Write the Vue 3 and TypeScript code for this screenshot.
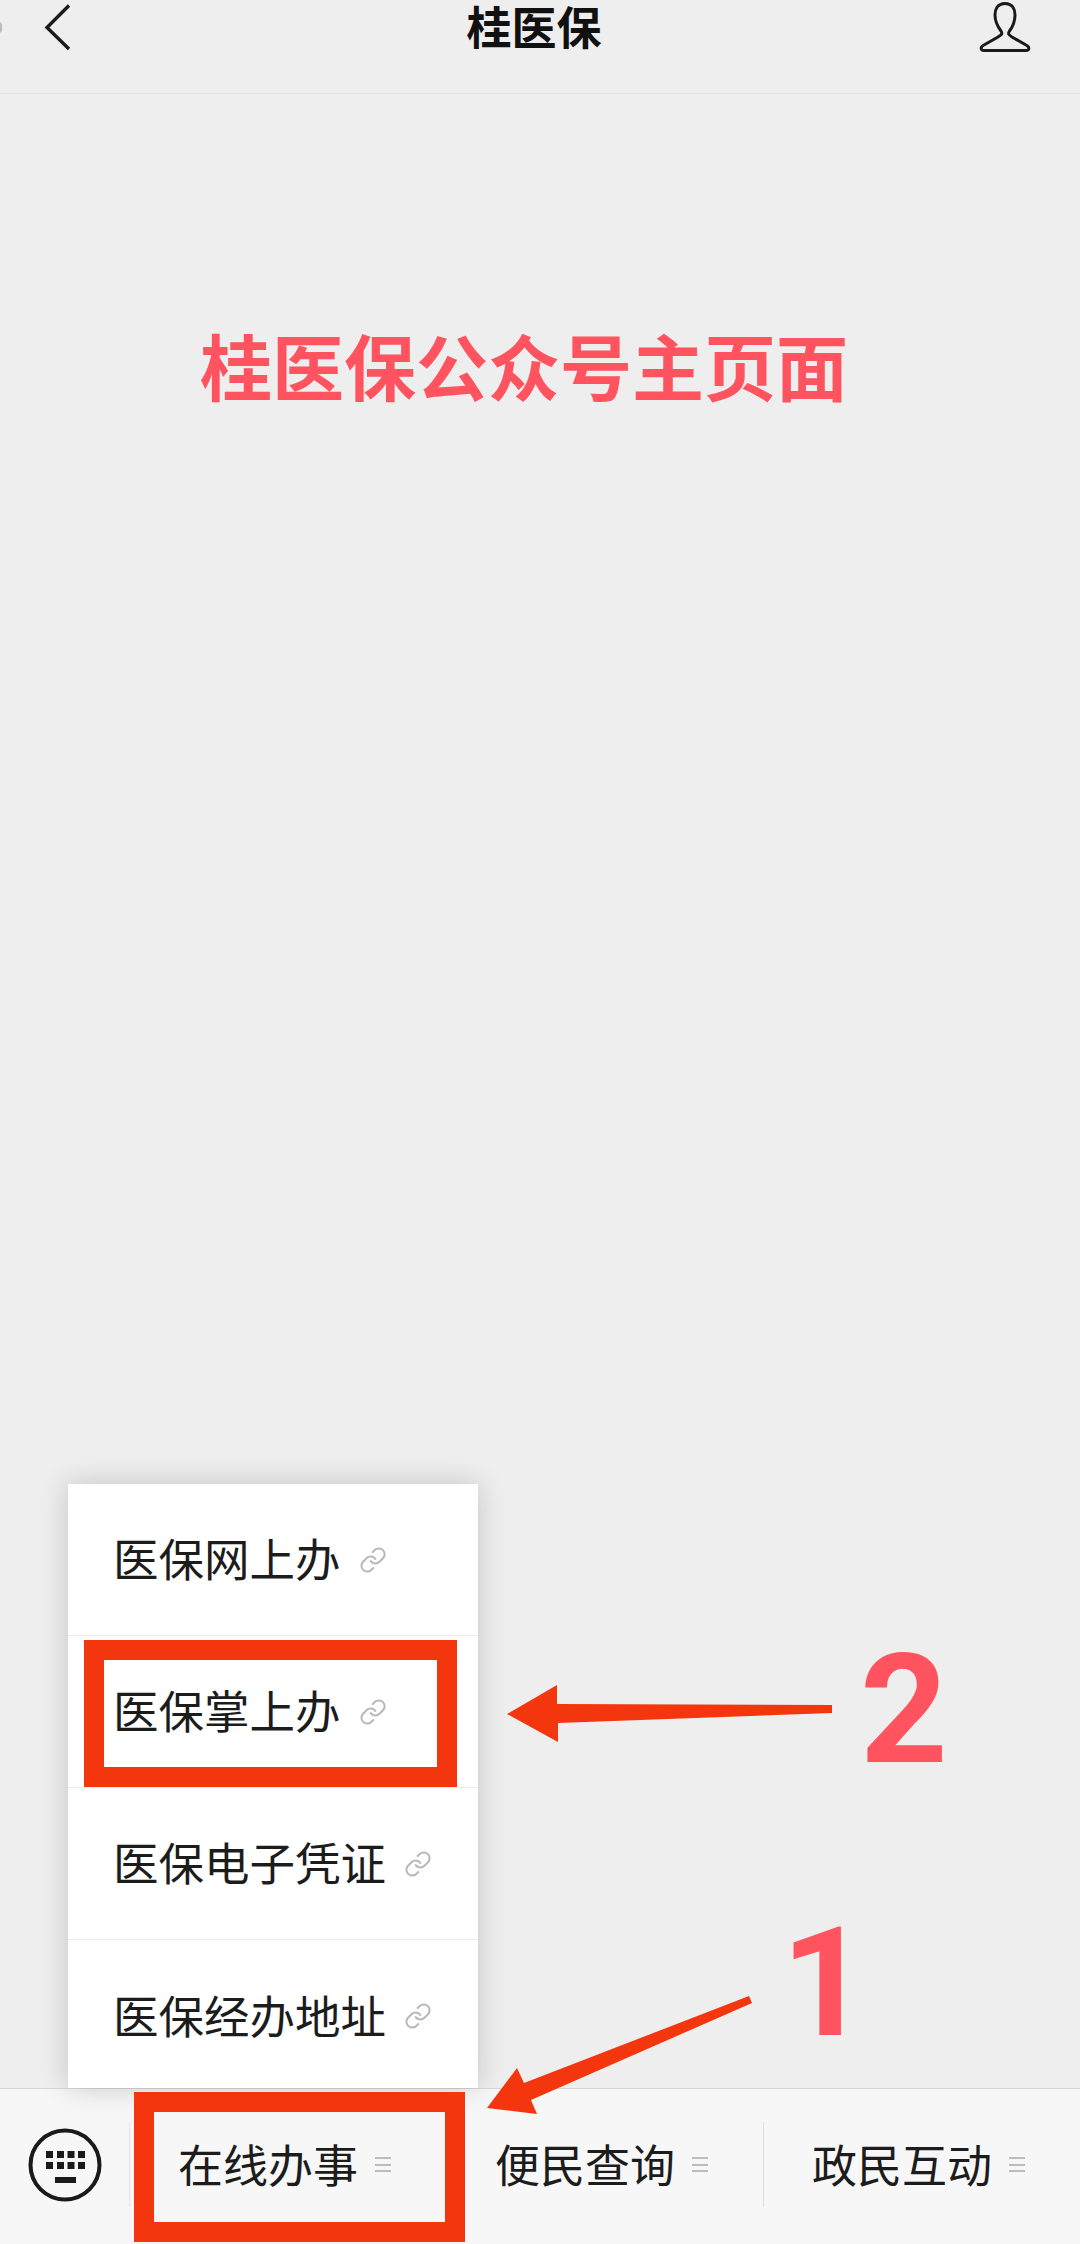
<script setup lang="ts">
const menuItems = ['医保网上办', '医保掌上办', '医保电子凭证', '医保经办地址'];
const tabs = ['在线办事', '便民查询', '政民互动'];
const keyXs = [46, 57, 67.5, 78];
const keyYs = [2150, 2161];
</script>

<template>
  <div class="page">
    <header class="nav">
      <svg class="nav__icon" width="90" height="70" viewBox="0 0 90 70">
        <path d="M0 22 L2 24 L2 31 L0 33 Z" fill="#bbb" />
        <path d="M69 5.5 L47 27.5 L69 49" fill="none" stroke="#1a1a1a" stroke-width="3.4" />
      </svg>
      <h1 class="nav__title">桂医保</h1>
      <svg class="nav__icon" width="90" height="70" viewBox="0 0 90 70">
        <path
          d="M45 3.5 C37 3.5 35 10 35 15 C35 22 38 27 41 31 C43 34 41 35 38 37 L24 45 C20 47 20.5 50.5 24 50.5 L66 50.5 C69.5 50.5 70 47 66 45 L52 37 C49 35 47.5 34 49.5 31 C52.5 27 55 22 55 15 C55 10 53 3.5 45 3.5 Z"
          fill="none"
          stroke="#1a1a1a"
          stroke-width="3"
        />
      </svg>
    </header>

    <main class="content">
      <p class="headline">桂医保公众号主页面</p>
    </main>

    <footer class="bar">
      <div class="bar__keyboard">
        <svg width="76" height="76" viewBox="27 2126 76 76">
          <circle cx="65" cy="2164" r="34.5" fill="none" stroke="#1a1a1a" stroke-width="4" />
          <template v-for="y in keyYs" :key="y">
            <rect v-for="x in keyXs" :key="x" :x="x" :y="y" width="7" height="7" fill="#1a1a1a" />
          </template>
          <rect x="55" y="2176" width="21" height="6" fill="#1a1a1a" />
        </svg>
      </div>
      <div v-for="tab in tabs" :key="tab" class="bar__tab">
        <span class="label">{{ tab }}</span>
        <i class="bar__lines"></i>
      </div>
    </footer>

    <ul class="menu">
      <li v-for="item in menuItems" :key="item" class="menu__row">
        <span class="label">{{ item }}</span>
        <svg
          width="28"
          height="28"
          viewBox="0 0 24 24"
          fill="none"
          stroke="#b8b8b8"
          stroke-width="1.7"
          stroke-linecap="round"
        >
          <path d="M10 13a5 5 0 0 0 7.54.54l3-3a5 5 0 0 0-7.07-7.07l-1.72 1.71" />
          <path d="M14 11a5 5 0 0 0-7.54-.54l-3 3a5 5 0 0 0 7.07 7.07l1.71-1.71" />
        </svg>
      </li>
    </ul>

    <!-- annotations drawn over the screenshot -->
    <div class="mark mark--menu"></div>
    <div class="mark mark--tab"></div>
    <svg class="arrows" width="1080" height="2244" viewBox="0 0 1080 2244">
      <polygon points="507,1714 557,1685 557,1704 832,1705 832,1713 558,1723 558,1742" />
      <polygon points="749,1996 752,2003 531,2100 537,2114 487,2108 517,2068 524,2083" />
    </svg>
    <span class="digit digit--two">2</span>
    <span class="digit digit--one">1</span>
  </div>
</template>

<style scoped>
.page {
  position: relative;
  display: flex;
  flex-direction: column;
  width: 1080px;
  height: 2244px;
  overflow: hidden;
  background: #eeeeee;
  color: #1c1c1c;
  font-family: "Noto Sans CJK SC", "Liberation Sans", sans-serif;
}

.nav {
  display: flex;
  justify-content: space-between;
  align-items: flex-start;
  height: 93px;
  padding-right: 30px;
  border-bottom: 1px solid #e4e4e4;
  box-sizing: content-box;
}

.nav__icon {
  display: block;
  flex: none;
}

.nav__title {
  margin: 2px 0 0 18px;
  font-size: 45px;
  font-weight: 700;
  line-height: 48px;
  color: #111;
}

.content {
  flex: 1;
  padding-top: 234px;
}

.headline {
  margin: 0;
  font-size: 72px;
  font-weight: 700;
  line-height: 72px;
  text-align: center;
  color: #ff5460;
  transform: translateX(-16px);
}

.bar {
  display: flex;
  align-items: center;
  flex: none;
  height: 156px;
  padding-bottom: 4px;
  box-sizing: border-box;
  background: #f7f7f7;
  border-top: 1px solid #d6d6d6;
}

.bar__keyboard {
  display: flex;
  justify-content: center;
  align-items: center;
  flex: none;
  width: 130px;
  height: 85px;
  border-right: 1px solid #e6e6e6;
  box-sizing: border-box;
}

.bar__tab {
  display: flex;
  align-items: center;
  flex: none;
  width: 317px;
  height: 85px;
  padding-left: 48px;
  box-sizing: border-box;
  border-right: 1px solid #e0e0e0;
  font-size: 45px;
  line-height: 1;
}

.bar__tab:last-child {
  border-right: 0;
}

.bar__lines {
  display: block;
  width: 16px;
  height: 15px;
  margin-left: 17px;
  background: linear-gradient(
    #bdbdbd 0 2px,
    transparent 2px 6.5px,
    #bdbdbd 6.5px 8.5px,
    transparent 8.5px 13px,
    #bdbdbd 13px 15px
  );
}

.label {
  margin-bottom: 3px;
}

.menu {
  position: absolute;
  left: 68px;
  top: 1484px;
  width: 410px;
  height: 604px;
  margin: 0;
  padding: 0;
  overflow: hidden;
  list-style: none;
  background: #fff;
  box-shadow: 0 0 26px rgba(0, 0, 0, 0.18);
}

.menu__row {
  display: flex;
  align-items: center;
  gap: 18px;
  height: 152px;
  padding-left: 45px;
  box-sizing: border-box;
  border-bottom: 1px solid #ececec;
  font-size: 45.5px;
  line-height: 1;
}

.menu__row:last-child {
  border-bottom: 0;
}

.mark {
  position: absolute;
  box-sizing: border-box;
  border: 20px solid #f4360f;
}

.mark--menu {
  left: 84px;
  top: 1640px;
  width: 373px;
  height: 147px;
}

.mark--tab {
  left: 134px;
  top: 2092px;
  width: 331px;
  height: 150px;
}

.arrows {
  position: absolute;
  left: 0;
  top: 0;
  fill: #f4360f;
  pointer-events: none;
}

.digit {
  position: absolute;
  font-family: Roboto, "Liberation Sans", sans-serif;
  font-weight: 700;
  line-height: 1;
  color: #ff5460;
}

.digit--two {
  left: 860px;
  top: 1633px;
  font-size: 153px;
}

.digit--one {
  left: 781px;
  top: 1906px;
  font-size: 153px;
}
</style>
